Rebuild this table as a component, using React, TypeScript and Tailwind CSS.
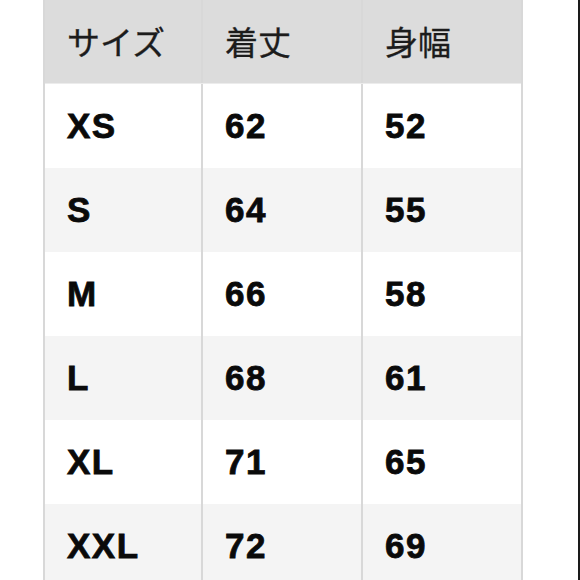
const header = ["サイズ", "着丈", "身幅"];

const rows: [string, string, string][] = [
  ["XS", "62", "52"],
  ["S", "64", "55"],
  ["M", "66", "58"],
  ["L", "68", "61"],
  ["XL", "71", "65"],
  ["XXL", "72", "69"],
];

export default function App() {
  return (
    <div className="flex h-[580px] w-[580px] overflow-hidden bg-white">
      <div className="ml-[43px] flex w-[480px] flex-col border-x-2 border-[#d8d8d8]">
        {/* header */}
        <div className="grid h-[84px] shrink-0 grid-cols-[158px_160px_158px] divide-x-2 divide-[#d8d8d8] border-b border-[#ececec] bg-[#dcdcdc]">
          {header.map((h) => (
            <div
              key={h}
              className="flex items-center pl-[22px] pt-[1px] text-[33px] text-[#1c1c1c] font-['Noto_Sans_CJK_JP',sans-serif] [-webkit-text-stroke:0.3px_#1c1c1c]"
            >
              {h}
            </div>
          ))}
        </div>

        {rows.map((r, i) => (
          <div
            key={r[0]}
            className={
              "grid h-[84px] shrink-0 grid-cols-[158px_160px_158px] divide-x-2 divide-[#d8d8d8] " +
              (i % 2 === 0 ? "bg-white" : "bg-[#f4f4f4]")
            }
          >
            {r.map((c, j) => (
              <div
                key={j}
                className="flex items-center pl-[22px] text-[35px] font-bold tracking-[1.5px] text-[#0a0a0a] font-['Liberation_Sans',Arial,sans-serif] [-webkit-text-stroke:0.8px_#0a0a0a]"
              >
                {c}
              </div>
            ))}
          </div>
        ))}
      </div>
      <div className="ml-auto w-[2px] bg-[#1a1a1a]" />
    </div>
  );
}
